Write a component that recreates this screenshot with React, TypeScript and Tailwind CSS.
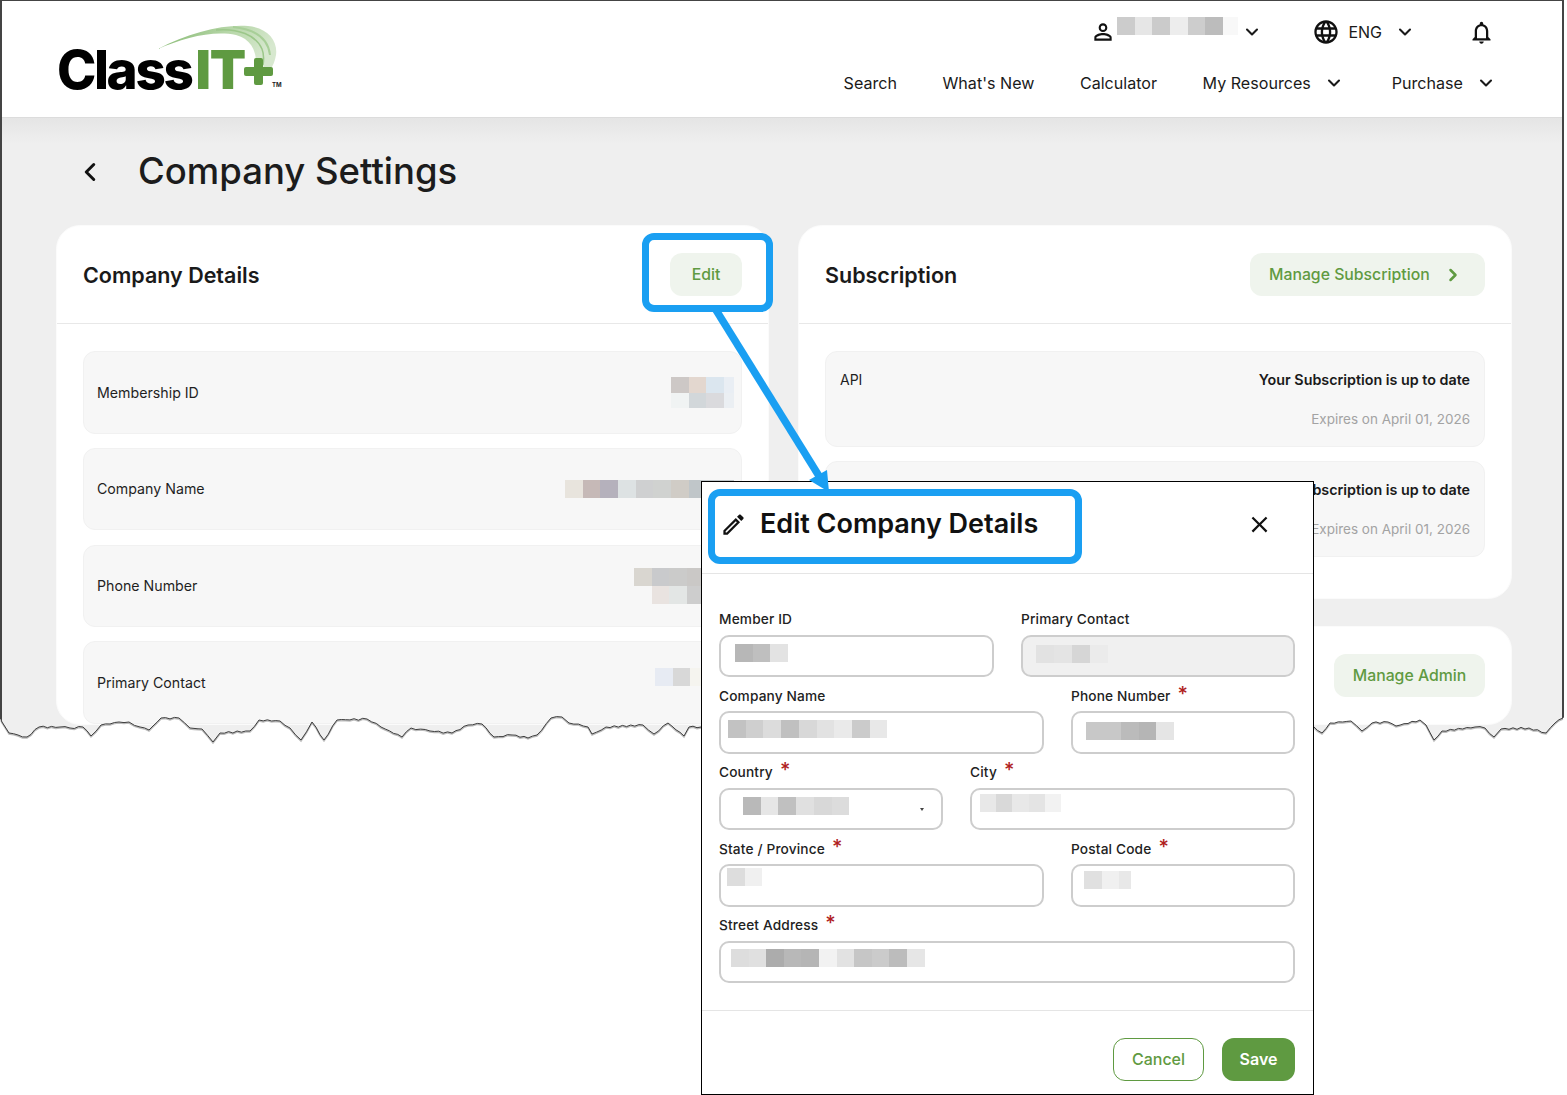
import { ChevronDown, ChevronLeft, ChevronRight } from "lucide-react";
import React from "react";
import { MdClose, MdLanguage, MdOutlineEdit, MdOutlineNotifications, MdPersonOutline } from "react-icons/md";

// blurred-out values in the screenshot
const Mosaic = ({ cols, rows, rowH = 18 }: { cols: number[]; rows: (string | null)[][]; rowH?: number }) => {
    const width = cols.reduce((a, b) => a + b, 0);
    return (
        <svg width={width} height={rows.length * rowH} className="block shrink-0" shapeRendering="crispEdges">
            {rows.map((row, r) => {
                let x = 0;
                return row.map((fill, c) => {
                    const cell = fill ? <rect key={`${r}-${c}`} x={x} y={r * rowH} width={cols[c]} height={rowH} fill={fill} /> : null;
                    x += cols[c];
                    return cell;
                });
            })}
        </svg>
    );
};

const even = (n: number, w = 18) => Array.from({ length: n }, () => w);

const Logo = () => (
    <div className="relative w-[226px] h-[66px]">
        <svg className="absolute left-[100px] top-0" width="126" height="66" viewBox="160 26 126 66">
            <defs>
                <linearGradient id="swoosh" x1="0" y1="0" x2="1" y2="0.35">
                    <stop offset="0" stopColor="#7fb56a" />
                    <stop offset="0.6" stopColor="#b9d8ab" />
                    <stop offset="1" stopColor="#d7e8cf" />
                </linearGradient>
            </defs>
            <path d="M160 50 C190 34 225 25 250 27 C270 29 280 42 278 56 C277 62 275 67 272 71 L258 64 C258 50 252 40 238 36 C215 31 185 39 160 50 Z" fill="url(#swoosh)" />
            <path d="M218 31 C240 29 258 36 264 50 C266 55 266 60 265 66" fill="none" stroke="#9cc78a" strokeWidth="1.5" />
            <path d="M235 28 C255 30 270 38 272 56" fill="none" stroke="#a8cf98" strokeWidth="2" />
            <rect x="256" y="59" width="9" height="27" rx="2" fill="#5f9a41" />
            <rect x="246" y="68" width="29" height="9" rx="2" fill="#5f9a41" />
        </svg>
        <div className="absolute -left-[1px] top-[14px] flex text-[53px] leading-[62px] font-extrabold tracking-[-2.4px] text-black">
            Class<span className="text-[#5f9a41] ml-[4px] font-black tracking-[-1px]">IT</span>
        </div>
        <span className="absolute left-[214px] top-[56px] text-[6px] leading-[8px] font-bold text-[#222]">TM</span>
    </div>
);

const TopBar = () => (
    <header className="h-[117px] bg-white border-b border-[#dcdcdc] flex justify-between pl-[56px]">
        <div className="pt-[24px]">
            <Logo />
        </div>
        <div className="flex flex-col items-end pr-[66px] text-[#1a1a1a]">
            <div className="flex items-center h-[62px] pr-[1px]">
                <MdPersonOutline size={26} className="text-[#111] mr-[1px]" />
                <div className="-mt-[13px]">
                    <Mosaic
                        cols={[18, 17, 18, 18, 17, 18, 15]}
                        rows={[["#cccccc", "#e6e6e6", "#cbcbcb", "#ededed", "#cdcdcd", "#bcbcbc", "#f8f8f8"]]}
                    />
                </div>
                <ChevronDown size={20} strokeWidth={2.5} className="ml-[4px] mr-[50px]" />
                <MdLanguage size={28} className="text-[#111]" />
                <span className="ml-[8px] text-[16px]">ENG</span>
                <ChevronDown size={20} strokeWidth={2.5} className="ml-[13px] mr-[53px]" />
                <MdOutlineNotifications size={27} className="text-[#111]" />
            </div>
            <nav className="flex items-center text-[16.1px] h-[40px]">
                <span>Search</span>
                <span className="ml-[45.5px]">What's New</span>
                <span className="ml-[45.5px]">Calculator</span>
                <span className="ml-[45.5px]">My Resources</span>
                <ChevronDown size={20} strokeWidth={2.5} className="ml-[13px]" />
                <span className="ml-[48px]">Purchase</span>
                <ChevronDown size={20} strokeWidth={2.5} className="ml-[13px]" />
            </nav>
        </div>
    </header>
);

const Card = ({ title, action, children }: { title?: string; action: React.ReactNode; children?: React.ReactNode }) => (
    <section className="bg-white border border-[#fbfbfb] rounded-[24px]">
        <div className="h-[97px] px-[26px] flex items-center justify-between">
            <h2 className="mt-[1px] text-[21.5px] font-semibold text-[#1a1a1a]">{title}</h2>
            {action}
        </div>
        {children && <div className="border-t border-[#e8e8e8] px-[26px] pt-[27px] flex flex-col gap-[14.25px]">{children}</div>}
    </section>
);

const GreenButton = ({ children, className }: { children: React.ReactNode; className?: string }) => (
    <button className={`h-[43px] rounded-[12px] bg-[#eff4ed] text-[#5f9a41] text-[15.8px] font-medium flex items-center ${className}`}>
        {children}
    </button>
);

const DetailRow = ({ label, children }: { label: string; children: React.ReactNode }) => (
    <div className="h-[82.5px] rounded-[12px] bg-[#f7f7f7] border border-[#f1f1f1] flex items-center justify-between pl-[13px] pr-[7px] text-[14.2px] text-[#1f1f1f]">
        <span>{label}</span>
        {children}
    </div>
);

const SubRow = ({ label }: { label?: string }) => (
    <div className="h-[96px] rounded-[12px] bg-[#f7f7f7] border border-[#f1f1f1] flex justify-between pt-[17px] pl-[14px] pr-[14px] text-[14px]">
        <span className="text-[#1f1f1f]">{label}</span>
        <div className="text-right">
            <p className="text-[14.3px] font-semibold text-[#1a1a1a]">Your Subscription is up to date</p>
            <p className="mt-[18.7px] text-[13.5px] text-[#a3a3a3]">Expires on April 01, 2026</p>
        </div>
    </div>
);

const Page = () => (
    <div className="w-[1564px] h-[748px] border-x-2 border-t border-[#444] overflow-hidden">
        <TopBar />
        <main className="h-[630px] bg-[linear-gradient(#e5e5e5,#efefef_26px)] px-[54px]">
            <div className="h-[107px] flex items-center">
                <ChevronLeft size={34} strokeWidth={2.4} className="text-[#111] ml-[19px] mr-[33px] w-[30px]" />
                <h1 className="text-[36.5px] font-medium text-[#1c1c1c]">Company Settings</h1>
            </div>
            <div className="grid grid-cols-[713px_714px] gap-[29px] items-start">
                <Card title="Company Details" action={<GreenButton className="w-[72px] justify-center">Edit</GreenButton>}>
                    <DetailRow label="Membership ID">
                        <Mosaic
                            cols={[18, 17, 18, 10]}
                            rowH={15.5}
                            rows={[
                                ["#cdc8c6", "#e3d7cf", "#dbe6ef", "#e9eef4"],
                                ["#f0f3f3", "#d2d7da", "#dadadd", "#ebeff3"],
                            ]}
                        />
                    </DetailRow>
                    <DetailRow label="Company Name">
                        <Mosaic
                            cols={[18, 17, 18, 18, 17, 18, 18, 11, 17, 17]}
                            rows={[["#e8e4dd", "#c6b9b7", "#b5b1bc", "#dde2e3", "#cfd0d1", "#d0d2d0", "#d0ccc6", "#c0c6c9", "#c0c6c9", "#c0c6c9"]]}
                        />
                    </DetailRow>
                    <DetailRow label="Phone Number">
                        <Mosaic
                            cols={[18, 17, 18, 13, 17, 17]}
                            rows={[
                                ["#d9d6d0", "#c9cacc", "#cbcbca", "#cac8c6", "#cac8c6", "#cac8c6"],
                                [null, "#e9e3e0", "#e3e6e5", "#cdcdcd", "#cdcdcd", "#cdcdcd"],
                            ]}
                        />
                    </DetailRow>
                    <DetailRow label="Primary Contact">
                        <div className="pb-[11px]">
                            <Mosaic cols={[18, 17, 44]} rows={[["#e7ebf3", "#d8d8d8", "#f5f4ef"]]} />
                        </div>
                    </DetailRow>
                </Card>
                <div className="flex flex-col gap-[29px]">
                    <div className="h-[372px]">
                        <Card
                            title="Subscription"
                            action={
                                <GreenButton className="w-[235px] pl-[19px] gap-[13px]">
                                    Manage Subscription
                                    <ChevronRight size={20} strokeWidth={3} />
                                </GreenButton>
                            }
                        >
                            <SubRow label="API" />
                            <div className="pb-[41px]">
                                <SubRow />
                            </div>
                        </Card>
                    </div>
                    <Card action={<GreenButton className="w-[151px] justify-center">Manage Admin</GreenButton>} />
                </div>
            </div>
        </main>
    </div>
);

const leftEdge = [[1,720],[2,722],[9,733],[18,735],[27,737],[39,727],[60,727],[70,728],[83,727],[91,736],[101,725],[110,724],[119,722],[129,722],[140,727],[149,730],[161,718],[179,718],[190,728],[202,729],[213,742],[220,733],[250,731],[259,720],[280,721],[290,728],[301,740],[312,722],[324,740],[337,720],[367,719],[381,727],[402,737],[411,728],[430,731],[452,733],[468,725],[482,724],[494,737],[512,735],[528,738],[537,735],[551,718],[562,717],[569,723],[588,727],[592,734],[606,727],[643,725],[654,734],[668,723],[684,736],[689,727],[701,727]];
const rightEdge = [[1313,726],[1322,733],[1330,723],[1351,721],[1362,731],[1372,723],[1388,722],[1396,726],[1420,720],[1426,725],[1434,740],[1442,731],[1475,727],[1485,728],[1494,737],[1501,729],[1529,728],[1546,733],[1555,723],[1563,718]];

// subdivide the long segments and wobble them so the edge looks torn
const roughen = (pts: number[][]) => {
    const out: number[][] = [];
    pts.forEach(([x, y], i) => {
        out.push([x, y]);
        const next = pts[i + 1];
        if (!next) return;
        const steps = Math.floor((next[0] - x) / 4);
        for (let s = 1; s < steps; s++) {
            const t = s / steps;
            const px = x + (next[0] - x) * t;
            out.push([px, y + (next[1] - y) * t + Math.sin(px * 2.3) * 0.9]);
        }
    });
    return out;
};

const toPath = (pts: number[][], dy = 0) => pts.map(([x, y], i) => `${i ? "L" : "M"}${x.toFixed(1)} ${(y + dy).toFixed(1)}`).join(" ");

const Tear = () => {
    const left = roughen(leftEdge);
    const right = roughen(rightEdge);
    return (
        <svg className="absolute left-0 top-[700px]" width="1567" height="60" viewBox="0 700 1567 60">
            <path d={`${toPath([[0, 719], ...left, ...right, [1567, 716], [1567, 760], [0, 760]])} Z`} fill="#fff" />
            <path d={`${toPath(left, 1)} ${toPath(right, 1)}`} fill="none" stroke="#bbb" strokeWidth="1.5" />
            <path d={`${toPath(left)} ${toPath(right)}`} fill="none" stroke="#3d3d3d" strokeWidth="1" />
        </svg>
    );
};

const Field = ({ label, required, children }: { label: string; required?: boolean; children: React.ReactNode }) => (
    <div>
        <label className="flex h-[20px] mb-[5px] pt-[0.5px] items-center text-[13.7px] font-medium tracking-[0.15px] text-[#222]">
            {label}
            {required && <span className="ml-[7px] -mt-[5px] text-[20px] leading-[20px] text-[#b01e1e]">*</span>}
        </label>
        {children}
    </div>
);

const Input = ({ pl, pt, muted, children }: { pl: string; pt: string; muted?: boolean; children?: React.ReactNode }) => (
    <div className={`h-[42.5px] rounded-[10px] border-2 border-[#cdcdcd] ${muted ? "bg-[#f0f0f0]" : "bg-white"} ${pl} ${pt}`}>{children}</div>
);

const gray = (...v: string[]) => [v.map((c) => `#${c}${c}${c}`)];

const EditDialog = () => (
    <div className="absolute left-[701px] top-[481px] w-[613px] h-[614px] bg-white border border-black flex flex-col">
        <div className="h-[92px] shrink-0 border-b border-[#e5e5e5] flex items-center pl-[18px] pb-[6px] pr-[40px]">
            <MdOutlineEdit size={27} className="text-[#111]" />
            <h2 className="ml-[13px] text-[27px] font-semibold text-[#111] flex-1">Edit Company Details</h2>
            <MdClose size={27} className="text-[#111]" />
        </div>
        <div className="pt-[35.5px] pl-[17px] pr-[18px] flex flex-col gap-[9px]">
            <div className="grid grid-cols-[275px_274px] gap-x-[27px]">
                <Field label="Member ID">
                    <Input pl="pl-[14px]" pt="pt-[7px]">
                        <Mosaic cols={[18, 17, 18]} rows={gray("b7", "bf", "e3")} />
                    </Input>
                </Field>
                <Field label="Primary Contact">
                    <Input pl="pl-[13px]" pt="pt-[8px]" muted>
                        <Mosaic cols={even(4)} rows={gray("e2", "e4", "d6", "eb")} />
                    </Input>
                </Field>
            </div>
            <div className="grid grid-cols-[325px_224px] gap-x-[27px]">
                <Field label="Company Name">
                    <Input pl="pl-[7px]" pt="pt-[7px]">
                        <Mosaic cols={even(9, 17.7)} rows={gray("c2", "cf", "dc", "c0", "d8", "e2", "ea", "cb", "e8")} />
                    </Input>
                </Field>
                <Field label="Phone Number" required>
                    <Input pl="pl-[13px]" pt="pt-[9px]">
                        <Mosaic cols={even(5, 17.6)} rows={gray("c8", "c8", "bb", "b5", "e5")} />
                    </Input>
                </Field>
            </div>
            <div className="grid grid-cols-[224px_325px] gap-x-[27px]">
                <Field label="Country" required>
                    <Input pl="pl-[22px]" pt="pt-[7px]">
                        <div className="flex justify-between pr-[17px]">
                            <Mosaic cols={even(6, 17.7)} rows={gray("b9", "e6", "c0", "e0", "d8", "dc")} />
                            <span className="mt-[11px] w-0 h-0 border-x-[2.5px] border-t-[3px] border-x-transparent border-t-[#444]" />
                        </div>
                    </Input>
                </Field>
                <Field label="City" required>
                    <Input pl="pl-[8px]" pt="pt-[4px]">
                        <Mosaic cols={even(5, 16.2)} rows={gray("e8", "d9", "e8", "e4", "f2")} />
                    </Input>
                </Field>
            </div>
            <div className="grid grid-cols-[325px_224px] gap-x-[27px]">
                <Field label="State / Province" required>
                    <Input pl="pl-[6px]" pt="pt-[2px]">
                        <Mosaic cols={[18, 17]} rows={gray("dd", "f0")} />
                    </Input>
                </Field>
                <Field label="Postal Code" required>
                    <Input pl="pl-[11px]" pt="pt-[5px]">
                        <Mosaic cols={[18, 17, 12]} rows={gray("e0", "f0", "e8")} />
                    </Input>
                </Field>
            </div>
            <Field label="Street Address" required>
                <Input pl="pl-[10px]" pt="pt-[6px]">
                    <Mosaic cols={even(11, 17.6)} rows={gray("dd", "e0", "ac", "b8", "b5", "f2", "e2", "c6", "cb", "bc", "e6")} />
                </Input>
            </Field>
        </div>
        <div className="mt-[26.5px] border-t border-[#e5e5e5] flex justify-end gap-[18px] pt-[27px] pr-[18px]">
            <button className="w-[91px] h-[43px] rounded-[12px] border border-[#5f9a41] text-[#5f9a41] text-[16px] font-medium">Cancel</button>
            <button className="w-[73px] h-[43px] rounded-[12px] bg-[#5f9a41] text-white text-[16px] font-semibold">Save</button>
        </div>
    </div>
);

// blue callouts drawn on top of the screenshot
const Callouts = () => (
    <>
        <div className="absolute left-[642px] top-[233px] w-[131px] h-[79px] border-[7px] border-[#1a9ff2] rounded-[12px]" />
        <div className="absolute left-[708px] top-[489px] w-[374px] h-[75px] border-[7px] border-[#1a9ff2] rounded-[12px]" />
        <svg className="absolute left-[700px] top-[300px]" width="140" height="200" viewBox="700 300 140 200">
            <line x1="716" y1="310" x2="819" y2="476" stroke="#1a9ff2" strokeWidth="7.5" />
            <polygon points="809,480 827,470 829,492" fill="#1a9ff2" />
        </svg>
    </>
);

const App = () => {
    return (
        <div className="relative w-[1567px] h-[1095px] bg-white overflow-hidden font-['Inter',sans-serif]">
            <Page />
            <Tear />
            <EditDialog />
            <Callouts />
        </div>
    );
};

export default App;
